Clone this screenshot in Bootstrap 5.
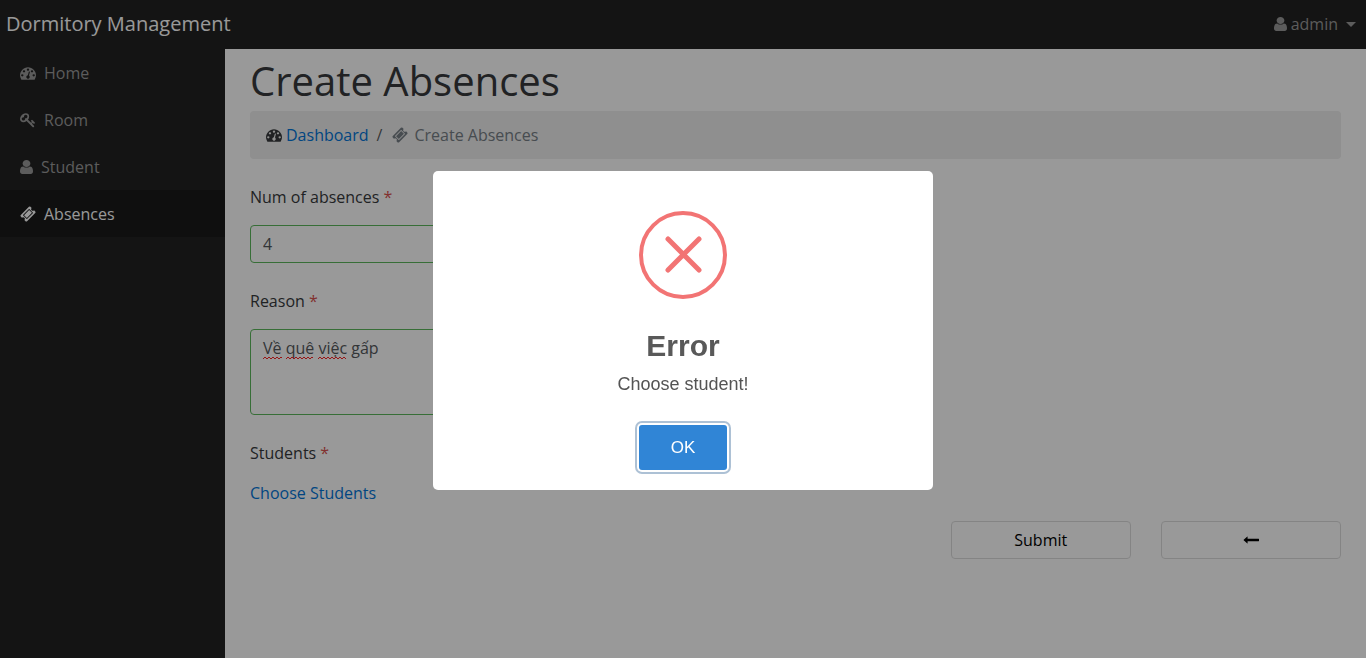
<!DOCTYPE html>
<html lang="en">
<head>
<meta charset="utf-8">
<meta name="viewport" content="width=device-width, initial-scale=1">
<title>Dormitory Management</title>
<link href="https://cdn.jsdelivr.net/npm/bootstrap@5.3.0/dist/css/bootstrap.min.css" rel="stylesheet">
<style>
  body { font-family: "Open Sans", sans-serif; font-weight: 400; color: #373a3c; }
  a { text-decoration: none; color: #0275d8; }
  .icon { width: 16px; height: 16px; fill: currentColor; flex: none; }
  .icon-user { width: 13px; height: 14px; }
  .topbar { background: #222; height: 49px; padding: 0 10px 2px 6px; }
  .topbar .navbar-brand { font-size: 20px; color: #fff; }
  .user-menu { color: #999; gap: 4px; }
  .user-menu::after { margin: 2px 0 0 4px; border-width: 5px 5px 0; }
  .user-menu:hover { color: #ccc; }
  .sidebar { width: 225px; background: #222; }
  .sidebar .nav-link { height: 47px; padding: 0 20px; gap: 8px; color: #999; }
  .sidebar .nav-link.active { background: #191919; color: #fff; }
  .page { padding: 8px 25px; min-width: 0; }
  .page h1 { font-size: 40px; line-height: 48px; font-weight: 400; margin-bottom: 6px; }
  .crumbs { background: #eee; padding: 12px 16px; margin-bottom: 26px; line-height: 24px; border-radius: 4px; }
  .crumbs .breadcrumb-item { gap: 4px; }
  .crumbs .breadcrumb-item.active { color: #777f86; gap: 6px; }
  .crumbs .breadcrumb-item::before { padding-right: 4px; }
  .required { color: #d9534f; }
  .field { margin-bottom: 26px; }
  .form-label { line-height: 24px; margin-bottom: 16px; }
  .form-control { display: block; color: #55595c; border-radius: 4px; }
  .form-control.ok { border-color: #5cb85c; }
  .squiggle { left: 13px; top: 27px; width: 85px; height: 4px; fill: none; stroke: #f22; stroke-width: 1; pointer-events: none; }
  .actions { display: grid; grid-template-columns: 1fr 1fr; gap: 30px; width: calc((100% + 30px) * .375 - 30px); }
  .btn-plain { border: 1px solid #ddd; color: #000; height: 38px; border-radius: 4px; background: #fff; }
  .btn-plain .icon { display: inline-block; vertical-align: -2px; }
  .shade { background: rgba(0, 0, 0, .4); padding-top: 2px; }
  .alert-box { border: 0; border-radius: 5px; padding: 40px 20px 20px; font-family: "Liberation Sans", sans-serif; color: #545454; }
  .alert-box h2 { font-size: 30px; line-height: 45px; font-weight: 700; color: #595959; margin: 24px 0 4px; }
  .alert-box p { font-size: 18px; line-height: 24px; margin-bottom: 29px; }
  .btn-ok { background: #3085d6; color: #fff; font-size: 17px; width: 88px; height: 45px; padding: 8px 0 6px; border: 0; border-radius: 3px; box-shadow: 0 0 0 2px #fff, 0 0 0 4px rgba(50, 100, 150, .4); }
  .btn-ok:hover { background: #2b77c0; color: #fff; }
</style>
</head>
<body>
<svg class="d-none" aria-hidden="true">
  <symbol id="dash" viewBox="0 0 1792 1792"><path d="M384 1152q0-53-37.5-90.5t-90.5-37.5-90.5 37.5-37.5 90.5 37.5 90.5 90.5 37.5 90.5-37.5 37.5-90.5zm192-448q0-53-37.5-90.5t-90.5-37.5-90.5 37.5-37.5 90.5 37.5 90.5 90.5 37.5 90.5-37.5 37.5-90.5zm428 481l101-382q6-26-7.5-48.5t-38.5-29.5-48 6.5-30 39.5l-101 382q-60 5-107 43.5t-63 98.5q-20 77 20 146t117 89 146-20 89-117q16-60-6-117t-72-91zm660-33q0-53-37.5-90.5t-90.5-37.5-90.5 37.5-37.5 90.5 37.5 90.5 90.5 37.5 90.5-37.5 37.5-90.5zm-640-640q0-53-37.5-90.5t-90.5-37.5-90.5 37.5-37.5 90.5 37.5 90.5 90.5 37.5 90.5-37.5 37.5-90.5zm448 192q0-53-37.5-90.5t-90.5-37.5-90.5 37.5-37.5 90.5 37.5 90.5 90.5 37.5 90.5-37.5 37.5-90.5zm320 448q0 261-141 483-19 29-54 29h-1402q-35 0-54-29-141-221-141-483 0-182 71-348t191-286 286-191 348-71 348 71 286 191 191 286 71 348z"/></symbol>
  <symbol id="key" viewBox="0 0 1792 1792"><path d="M832 512q0-80-56-136t-136-56-136 56-56 136q0 42 19 83-41-19-83-19-80 0-136 56t-56 136 56 136 136 56 136-56 56-136q0-42-19-83 41 19 83 19 80 0 136-56t56-136zm851 704q0 17-49 66t-66 49q-9 0-28.5-16t-36.5-33-38.5-40-24.5-26l-96 96 220 220q28 28 28 68 0 42-39 81t-81 39q-40 0-68-28l-671-671q-176 131-365 131-163 0-265.5-102.5t-102.5-265.5q0-160 95-313t248-248 313-95q163 0 265.5 102.5t102.5 265.5q0 189-131 365l355 355 96-96q-3-3-26-24.5t-40-38.5-33-36.5-16-28.5q0-17 49-66t66-49q13 0 23 10 6 6 46 44.5t82 79.5 86.5 86 73 78 28.5 41z"/></symbol>
  <symbol id="user" viewBox="256 128 1280 1536" preserveAspectRatio="none"><path d="M1536 1399q0 109-62.500 187t-150.500 78h-854q-88 0-150.500-78t-62.500-187q0-85 8.500-160.500t31.500-152 58.500-131 94-89 134.500-34.500q131 128 313 128t313-128q76 0 134.500 34.500t94 89 58.500 131 31.500 152 8.500 160.500zm-256-887q0 159-112.500 271.500t-271.500 112.500-271.500-112.500-112.500-271.500 112.500-271.500 271.500-112.500 271.500 112.500 112.500 271.500z"/></symbol>
  <symbol id="ticket" viewBox="0 0 1792 1792"><path d="M1024 452l316 316-572 572-316-316zm-211 979l618-618q19-19 19-45t-19-45l-362-362q-18-18-45-18t-45 18l-618 618q-19 19-19 45t19 45l362 362q18 18 45 18t45-18zm889-637l-907 908q-37 37-90.500 37t-90.500-37l-126-126q56-56 56-136t-56-136-136-56-136 56l-125-126q-37-37-37-90.500t37-90.500l907-906q37-37 90.500-37t90.500 37l125 125q-56 56-56 136t56 136 136 56 136-56l126 125q37 37 37 90.500t-37 90.500z"/></symbol>
  <symbol id="back" viewBox="0 0 1792 1792"><path d="M1792 800v192q0 14-9 23t-23 9h-1248v224q0 21-19 29t-35-5l-384-350q-10-10-10-23 0-14 10-24l384-354q16-14 35-6 19 9 19 29v224h1248q14 0 23 9t9 23z"/></symbol>
</svg>

<div class="min-vh-100 d-flex flex-column">
  <nav class="navbar topbar d-flex justify-content-between">
    <a class="navbar-brand p-0 m-0" href="#">Dormitory Management</a>
    <a class="user-menu dropdown-toggle d-flex align-items-center" href="#" role="button" data-bs-toggle="dropdown"><svg class="icon icon-user"><use href="#user"/></svg>admin</a>
  </nav>
  <div class="d-flex flex-grow-1">
    <nav class="sidebar nav flex-column flex-shrink-0" aria-label="Main">
      <a class="nav-link d-flex align-items-center" href="#"><svg class="icon"><use href="#dash"/></svg>Home</a>
      <a class="nav-link d-flex align-items-center" href="#"><svg class="icon"><use href="#key"/></svg>Room</a>
      <a class="nav-link d-flex align-items-center" href="#"><svg class="icon icon-user"><use href="#user"/></svg>Student</a>
      <a class="nav-link active d-flex align-items-center" href="#" aria-current="page"><svg class="icon"><use href="#ticket"/></svg>Absences</a>
    </nav>
    <main class="page flex-grow-1">
      <h1>Create Absences</h1>
      <ol class="breadcrumb crumbs">
        <li class="breadcrumb-item d-flex align-items-center"><svg class="icon"><use href="#dash"/></svg><a href="#">Dashboard</a></li>
        <li class="breadcrumb-item active d-flex align-items-center" aria-current="page"><svg class="icon"><use href="#ticket"/></svg>Create Absences</li>
      </ol>
      <form>
        <div class="row">
          <div class="col-6">
            <div class="field">
              <label class="form-label d-block" for="num">Num of absences <span class="required">*</span></label>
              <input class="form-control ok" id="num" type="text" value="4">
            </div>
            <div class="field">
              <label class="form-label d-block" for="reason">Reason <span class="required">*</span></label>
              <div class="position-relative">
                <textarea class="form-control ok" id="reason" rows="3">Về quê việc gấp</textarea>
                <svg class="squiggle position-absolute" viewBox="0 0 85 4" aria-hidden="true"><path d="M0 3l2-2 2 2 2-2 2 2 2-2 2 2 2-2 2 2 2-2 1 1M23 3l2-2 2 2 2-2 2 2 2-2 2 2 2-2 2 2 2-2 2 2 2-2 2 2 2-2 1 1M55 3l2-2 2 2 2-2 2 2 2-2 2 2 2-2 2 2 2-2 2 2 2-2 2 2 2-2 2 2"/></svg>
              </div>
            </div>
            <div class="form-label">Students <span class="required">*</span></div>
            <a class="d-inline-block mb-3" href="#">Choose Students</a>
          </div>
        </div>
        <div class="actions ms-auto">
          <button class="btn btn-plain py-0" type="submit">Submit</button>
          <button class="btn btn-plain py-0" type="button" aria-label="Back"><svg class="icon"><use href="#back"/></svg></button>
        </div>
      </form>
    </main>
  </div>
</div>

<div class="modal shade d-block" role="alertdialog" aria-labelledby="alertTitle" aria-describedby="alertText">
  <div class="modal-dialog modal-dialog-centered">
    <div class="modal-content alert-box align-items-center text-center">
      <svg width="88" height="88" viewBox="0 0 88 88" fill="none" stroke="#f27474" aria-hidden="true"><circle cx="44" cy="44" r="42" stroke-width="4"/><path d="M29 28l31 31M60 28L29 59" stroke-width="5" stroke-linecap="round"/></svg>
      <h2 id="alertTitle">Error</h2>
      <p id="alertText">Choose student!</p>
      <button class="btn btn-ok" type="button">OK</button>
    </div>
  </div>
</div>
<script src="https://cdn.jsdelivr.net/npm/bootstrap@5.3.0/dist/js/bootstrap.bundle.min.js"></script>
</body>
</html>
